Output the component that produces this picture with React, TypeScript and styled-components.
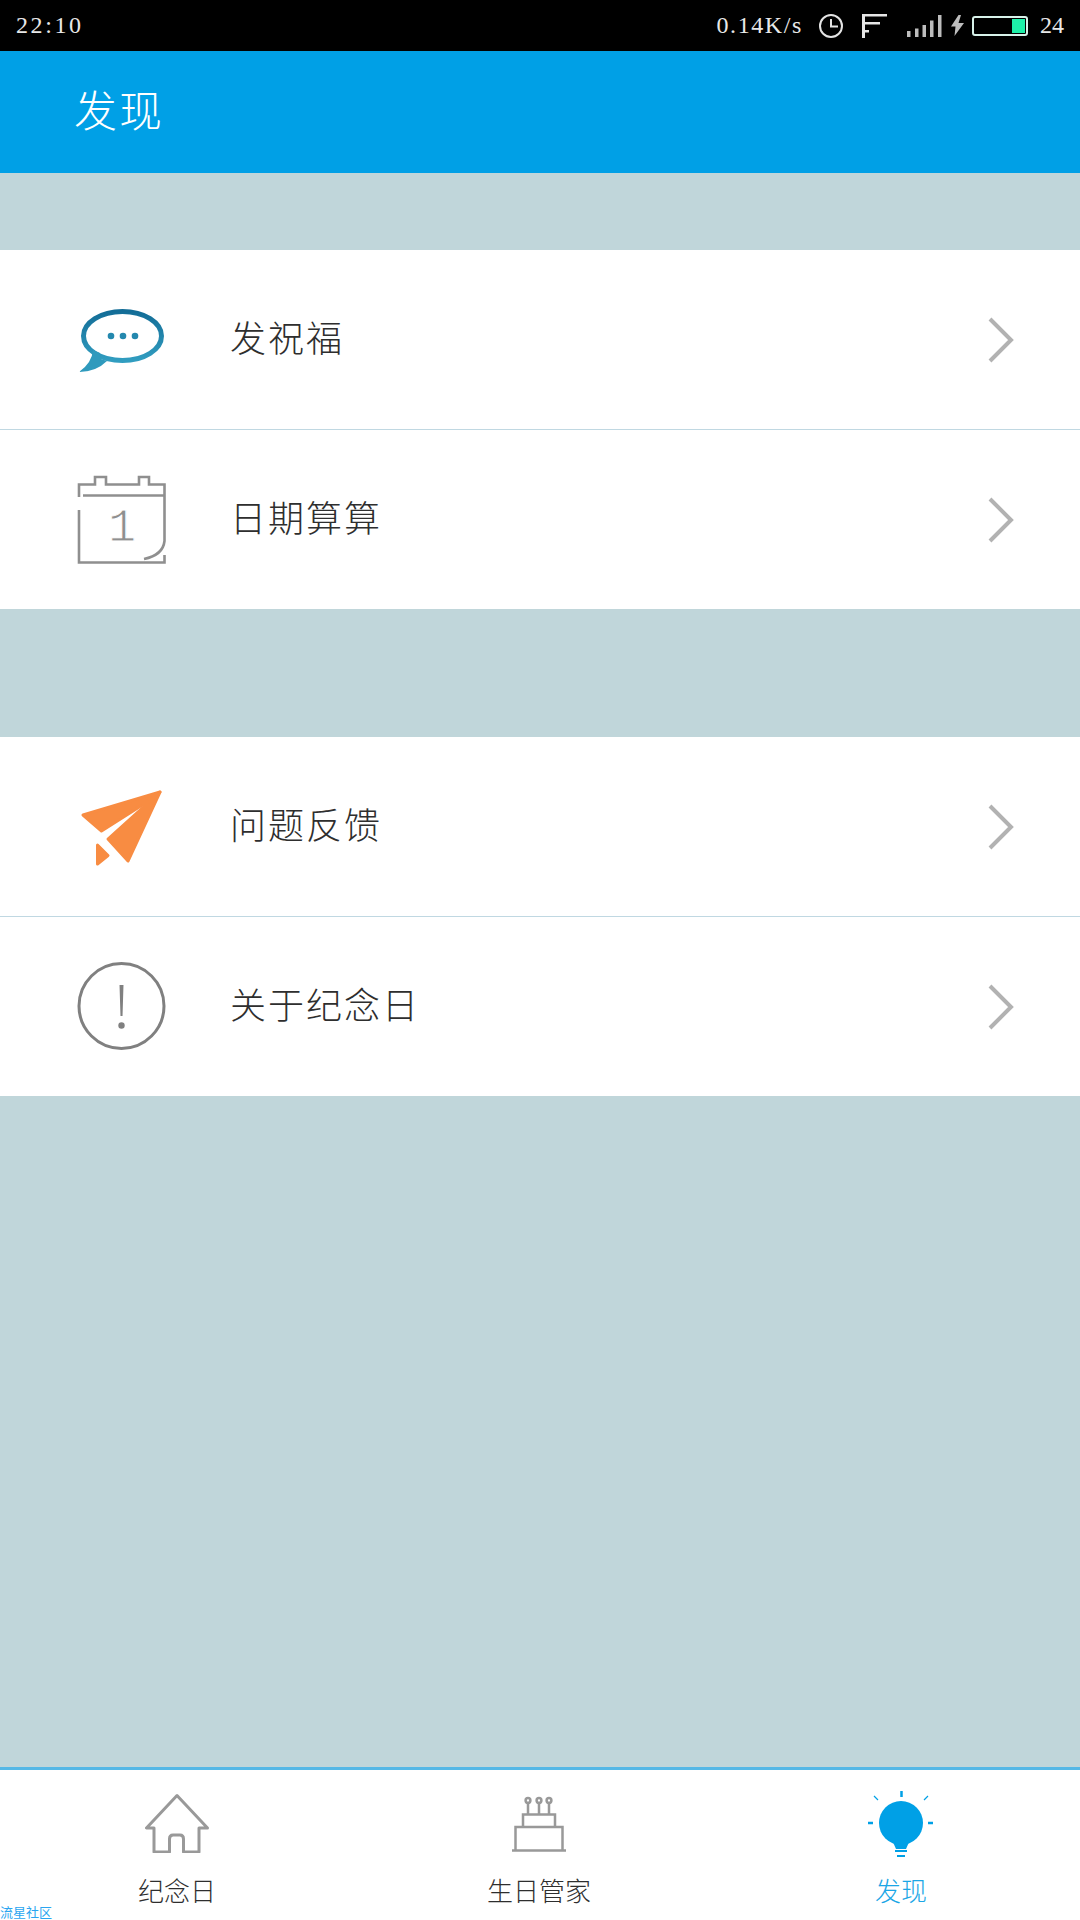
import styled, { createGlobalStyle } from "styled-components";
import { ReactNode } from "react";

const Global = createGlobalStyle`
  html, body {
    margin: 0;
    padding: 0;
    background: #c0d6da;
  }
  * {
    box-sizing: border-box;
  }
`;

const cjk = `"Noto Sans CJK SC", "Liberation Serif", serif`;
const statusFont = `"Liberation Serif", serif`;
const blue = "#00a0e6";

// status bar glyphs
function ClockIcon() {
  return (
    <svg width="26" height="26" viewBox="0 0 26 26">
      <circle cx="13" cy="13" r="11" fill="none" stroke="#e4e4e4" strokeWidth="2" />
      <path d="M13 6v7.5h7" fill="none" stroke="#e4e4e4" strokeWidth="2" />
    </svg>
  );
}

function CastIcon() {
  return (
    <svg width="25" height="24" viewBox="0 0 25 24">
      <path d="M0 0h3v24H0zM0 0h25v2.5H0zM0 8h18v2.5H0zM0 16h7v2.5H0z" fill="#e6e6e6" />
    </svg>
  );
}

function SignalIcon() {
  return (
    <svg width="35" height="23" viewBox="0 0 35 23">
      <path d="M0 17h3.5v6H0zM8 14.5h3.5V23H8zM15.5 11h3.5v12h-3.5zM23 6.5h3.5V23H23zM31 1h3.5v22H31z" fill="#bdbdbd" />
    </svg>
  );
}

function BoltIcon() {
  return (
    <svg width="13" height="21" viewBox="0 0 13 21">
      <path d="M7.5 0 0 11.5h4.5L3.5 21 13 8H7.5L10 0z" fill="#bdbdbd" />
    </svg>
  );
}

// menu icons
function BubbleIcon() {
  return (
    <svg width="89" height="89" viewBox="0 0 89 89">
      <defs>
        <linearGradient id="bubble" x1="0" y1="0" x2="0" y2="1">
          <stop offset="0" stopColor="#136d97" />
          <stop offset="1" stopColor="#319dc0" />
        </linearGradient>
      </defs>
      <ellipse cx="45.5" cy="41" rx="39" ry="24.5" fill="none" stroke="url(#bubble)" strokeWidth="5" />
      <path d="M16 55Q15 68 2 77Q19 77 30 66L24 64Q22 61 23 58Z" fill="#2f9abd" />
      <circle cx="34" cy="41" r="3.3" fill="#2488ae" />
      <circle cx="46" cy="41" r="3.3" fill="#2488ae" />
      <circle cx="58" cy="41" r="3.3" fill="#2488ae" />
    </svg>
  );
}

function CalendarIcon() {
  return (
    <svg width="89" height="89" viewBox="0 0 89 89">
      <g fill="none" stroke="#8f8f8f" strokeWidth="2.6">
        <path d="M2 22V9.5H18V2H29V9.5H62V2H72V9.5H87.5V66Q86 80 67 84" />
        <path d="M6 20.5H87.5" />
        <path d="M2 35V87.5H87.5V80" />
      </g>
      {/* the white outline thins the digit down to a hairline */}
      <text
        x="45"
        y="66"
        textAnchor="middle"
        fontFamily="'Liberation Mono', monospace"
        fontSize="47"
        fill="#8f8f8f"
        stroke="#fff"
        strokeWidth="1"
      >
        1
      </text>
    </svg>
  );
}

function PlaneIcon() {
  return (
    <svg width="89" height="89" viewBox="0 0 89 89">
      <g fill="#f88c42" stroke="#f88c42" strokeWidth="3" strokeLinejoin="round">
        <path d="M83 10 6 33 24.5 49 67 22Z" />
        <path d="M83 10 51 79 31 57 72 20Z" />
        <path d="M20.5 63 31 73.5 20.5 82Z" />
      </g>
    </svg>
  );
}

function AlertIcon() {
  return (
    <svg width="89" height="89" viewBox="0 0 89 89">
      <circle cx="44.5" cy="44" r="42.5" fill="none" stroke="#808080" strokeWidth="3" />
      <path d="M42.5 23h4L45.5 54h-2Z" fill="#808080" />
      <circle cx="44.5" cy="63.5" r="3.2" fill="#808080" />
    </svg>
  );
}

function Chevron() {
  return (
    <svg width="26" height="46" viewBox="0 0 26 46">
      <path d="M2 2l21 21L2 44" fill="none" stroke="#b2b2b2" strokeWidth="4" />
    </svg>
  );
}

// tab bar icons
function HomeIcon() {
  return (
    <svg width="64" height="60" viewBox="0 0 64 60">
      <path
        d="M32 2.5 1.5 35H9V59H24.5V46Q24.5 42 28 42H35Q38.5 42 38.5 46V59H54V35H62.5Z"
        fill="none"
        stroke="#999"
        strokeWidth="3"
        strokeLinejoin="round"
      />
    </svg>
  );
}

function CakeIcon() {
  return (
    <svg width="54" height="57" viewBox="0 0 54 57">
      <g fill="none" stroke="#999" strokeWidth="2.5">
        <path d="M0 55.5H54" />
        <path d="M3.5 55V32H50.5V55" />
        <path d="M11 32V19.5H43V32" />
        <path d="M16 19.5V8M27 19.5V8M37 19.5V8" />
        <circle cx="16" cy="5.5" r="2.4" />
        <circle cx="27" cy="5.5" r="2.4" />
        <circle cx="37" cy="5.5" r="2.4" />
      </g>
    </svg>
  );
}

function BulbIcon() {
  return (
    <svg width="70" height="70" viewBox="0 0 70 70">
      <circle cx="35" cy="35" r="22" fill={blue} />
      <path d="M26 52h18l-4 9H30Z" fill={blue} />
      <path d="M29 62h12v2H29zM31 67h8v2h-8z" fill={blue} />
      <g stroke={blue} fill="none">
        <path d="M35.5 3v6" strokeWidth="2.5" />
        <path d="M2 35h5M62 35h5" strokeWidth="2.5" />
        <path d="M8 8l4 4M62 8l-4 4" strokeWidth="1.2" />
      </g>
    </svg>
  );
}

const Screen = styled.div`
  display: flex;
  flex-direction: column;
  position: relative;
  width: 1080px;
  height: 1920px;
  background: #c0d6da;
  overflow: hidden;
  font-family: ${cjk};
`;

const StatusBar = styled.div`
  display: flex;
  align-items: center;
  justify-content: space-between;
  height: 51px;
  padding: 0 16px 0 16px;
  background: #000;
  color: #e8e8e8;
  font-family: ${statusFont};
  font-size: 24px;
`;

const StatusText = styled.span<{ $spacing?: number }>`
  letter-spacing: ${(p) => p.$spacing ?? 1.6}px;
`;

const StatusRight = styled.div`
  display: flex;
  align-items: center;
`;

const IconSlot = styled.span<{ $left: number }>`
  display: flex;
  margin-left: ${(p) => p.$left}px;
`;

const Battery = styled.div`
  display: flex;
  justify-content: flex-end;
  width: 56px;
  height: 20px;
  margin-left: 8px;
  padding: 1px;
  border: 2px solid #d8f2ea;
  border-radius: 3px;
`;

const BatteryLevel = styled.div`
  width: 13px;
  background: #1df0a8;
`;

const AppBar = styled.div`
  display: flex;
  align-items: center;
  height: 122px;
  padding: 0 0 8px 74px;
  background: ${blue};
  color: #fff;
  font-size: 43px;
  font-weight: 300;
  letter-spacing: 2px;
`;

const Group = styled.div<{ $top: number }>`
  display: flex;
  flex-direction: column;
  margin-top: ${(p) => p.$top}px;
  background: #fff;
`;

const Row = styled.div`
  display: flex;
  align-items: center;
  height: 179px;
  padding: 0 66px 0 77px;
  & + & {
    height: 180px;
    border-top: 1px solid #c0d8e2;
  }
`;

const RowIcon = styled.div`
  display: flex;
  width: 89px;
  height: 89px;
  margin-right: 64px;
`;

const RowLabel = styled.span`
  flex: 1;
  margin-bottom: 8px;
  color: #2e2e2e;
  font-size: 36px;
  font-weight: 300;
  letter-spacing: 2px;
`;

const Spacer = styled.div`
  flex: 1;
`;

const TabBar = styled.div`
  display: grid;
  grid-template-columns: 354px 370px 354px;
  height: 153px;
  padding-top: 18px;
  border-top: 3px solid #55b8e6;
  background: #fff;
`;

const Tab = styled.div<{ $active?: boolean }>`
  display: flex;
  flex-direction: column;
  align-items: center;
  color: ${(p) => (p.$active ? "#1ba6e6" : "#2e2e2e")};
  font-size: 26px;
  font-weight: 300;
`;

const TabIcon = styled.div`
  display: flex;
  align-items: center;
  justify-content: center;
  height: 70px;
  margin-bottom: 13px;
`;

const Watermark = styled.div`
  position: absolute;
  left: 0;
  bottom: 0;
  color: #2aa5f0;
  font-size: 13px;
  line-height: 16px;
`;

type Item = { icon: ReactNode; label: string };

const topItems: Item[] = [
  { icon: <BubbleIcon />, label: "发祝福" },
  { icon: <CalendarIcon />, label: "日期算算" },
];

const bottomItems: Item[] = [
  { icon: <PlaneIcon />, label: "问题反馈" },
  { icon: <AlertIcon />, label: "关于纪念日" },
];

function MenuGroup({ items, top }: { items: Item[]; top: number }) {
  return (
    <Group $top={top}>
      {items.map((item) => (
        <Row key={item.label}>
          <RowIcon>{item.icon}</RowIcon>
          <RowLabel>{item.label}</RowLabel>
          <Chevron />
        </Row>
      ))}
    </Group>
  );
}

export default function App() {
  return (
    <Screen>
      <Global />
      <StatusBar>
        <StatusText $spacing={2.6}>22:10</StatusText>
        <StatusRight>
          <StatusText>0.14K/s</StatusText>
          <IconSlot $left={15}>
            <ClockIcon />
          </IconSlot>
          <IconSlot $left={18}>
            <CastIcon />
          </IconSlot>
          <IconSlot $left={20}>
            <SignalIcon />
          </IconSlot>
          <IconSlot $left={9}>
            <BoltIcon />
          </IconSlot>
          <Battery>
            <BatteryLevel />
          </Battery>
          <IconSlot $left={12}>
            <StatusText $spacing={0}>24</StatusText>
          </IconSlot>
        </StatusRight>
      </StatusBar>
      <AppBar>发现</AppBar>
      <MenuGroup items={topItems} top={77} />
      <MenuGroup items={bottomItems} top={128} />
      <Spacer />
      <TabBar>
        <Tab>
          <TabIcon>
            <HomeIcon />
          </TabIcon>
          纪念日
        </Tab>
        <Tab>
          <TabIcon>
            <CakeIcon />
          </TabIcon>
          生日管家
        </Tab>
        <Tab $active>
          <TabIcon>
            <BulbIcon />
          </TabIcon>
          发现
        </Tab>
      </TabBar>
      <Watermark>流星社区</Watermark>
    </Screen>
  );
}
